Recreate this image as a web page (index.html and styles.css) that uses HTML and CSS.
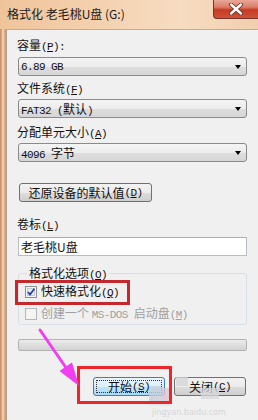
FILE: index.html
```html
<!DOCTYPE html>
<html>
<head>
<meta charset="utf-8">
<link rel="stylesheet" href="styles.css">
</head>
<body>
<div class="window">
  <div class="titlebar">
    <div class="title">格式化 老毛桃U盘 (G:)</div>
    <div class="close-btn">
      <svg width="16" height="12" viewBox="0 0 16 12">
        <path d="M3 1.5 L13 10.5 M13 1.5 L3 10.5" stroke="#5a2a22" stroke-width="4" stroke-linecap="round"/>
        <path d="M3 1.5 L13 10.5 M13 1.5 L3 10.5" stroke="#ffffff" stroke-width="2.4" stroke-linecap="round"/>
      </svg>
    </div>
  </div>
  <div class="main">
    <div class="frame-left"></div>
    <div class="panel">
      <div class="label l1">容量<span class="m">(<u>P</u>):</span></div>
      <div class="combo c1"><span class="m">6.89 GB</span><span class="arrow"></span></div>
      <div class="label l2">文件系统<span class="m">(<u>F</u>)</span></div>
      <div class="combo c2"><span><span class="m">FAT32 (</span>默认<span class="m">)</span></span><span class="arrow"></span></div>
      <div class="label l3">分配单元大小<span class="m">(<u>A</u>)</span></div>
      <div class="combo c3"><span><span class="m">4096 </span>字节</span><span class="arrow"></span></div>
      <div class="btn restore">还原设备的默认值<span class="m">(<u>D</u>)</span></div>
      <div class="label l4">卷标<span class="m">(<u>L</u>)</span></div>
      <div class="input">老毛桃U盘</div>
      <div class="group">
        <div class="legend">格式化选项<span class="m">(<u>O</u>)</span></div>
        <div class="check-row r1">
          <span class="checkbox">
            <svg width="12" height="12" viewBox="0 0 12 12">
              <rect x="0.5" y="0.5" width="11" height="11" fill="#f4f4f4" stroke="#8e8f8f"/>
              <rect x="2.5" y="2.5" width="7" height="7" fill="#e6ecf3" stroke="#c3cbd5"/>
              <path d="M3 6 L5 8.6 L9.4 2.8" fill="none" stroke="#2b3f8f" stroke-width="1.8"/>
            </svg>
          </span>
          <span class="ctext">快速格式化<span class="m">(<u>Q</u>)</span></span>
        </div>
        <div class="check-row r2 disabled">
          <span class="checkbox">
            <svg width="12" height="12" viewBox="0 0 12 12">
              <rect x="0.5" y="0.5" width="11" height="11" fill="#f4f4f4" stroke="#b6b6b6"/>
            </svg>
          </span>
          <span class="ctext">创建一个 <span class="m">MS-DOS </span>启动盘<span class="m">(<u>M</u>)</span></span>
        </div>
      </div>
      <div class="progress"></div>
      <div class="btn-row">
        <div class="btn start"><span class="focus">开始<span class="m">(<u>S</u>)</span></span></div>
        <div class="btn close">关闭<span class="m">(<u>C</u>)</span></div>
      </div>
    </div>
  </div>
</div>

<div class="wm w1"></div>
<div class="wm w2"></div>
<div class="wm w3"></div>
<div class="wm w4"></div>
<div class="wm w5"></div>
<div class="wm-text">jingyan.baidu.com</div>

<div class="hl hl1"></div>
<div class="hl hl2"></div>
<svg class="arrow-svg" width="258" height="420" viewBox="0 0 258 420">
  <path d="M40 330 L69 372" stroke="#f03ef0" stroke-width="3" stroke-linecap="round"/>
  <polygon points="79,386 59.5,371 72,362.5" fill="#f03ef0"/>
</svg>
</body>
</html>
```

FILE: styles.css
```css
* { box-sizing: border-box; }

body {
  margin: 0;
  width: 258px;
  height: 420px;
  overflow: hidden;
  position: relative;
  font-family: "Noto Sans CJK SC", "Noto Sans", sans-serif;
  font-size: 12px;
  color: #111;
  background: #f0f0f0;
}

.m {
  font-family: "Liberation Mono", monospace;
  font-size: 11px;
  letter-spacing: -0.6px;
}

u { text-decoration: underline; text-underline-offset: 1px; }

.window {
  display: flex;
  flex-direction: column;
  height: 420px;
}

.titlebar {
  height: 29px;
  flex: none;
  display: flex;
  justify-content: space-between;
  align-items: flex-start;
  background: linear-gradient(to right, #efc49a 0%, #f4d2b0 40%, #f7dcc2 70%, #f1cfae 100%);
}

.title {
  padding-left: 7px;
  line-height: 28px;
  font-size: 12px;
  color: #1a1a1a;
}

.close-btn {
  width: 45px;
  height: 19px;
  display: flex;
  align-items: center;
  justify-content: center;
  border: 1px solid #7a3328;
  border-top: none;
  border-right: none;
  border-radius: 0 0 0 4px;
  background: linear-gradient(#e9a797 0%, #dc7b66 40%, #c63a22 55%, #cf5238 100%);
}

.main {
  flex: 1;
  display: flex;
}

.frame-left {
  width: 6px;
  flex: none;
  background: linear-gradient(to right, #c58a5c 0px, #dfb08a 2px, #f6e4d2 3px, #e4b78e 4px, #cd966a 6px);
}

.panel {
  flex: 1;
  background: #f0f0f0;
  border-left: 1px solid #b39b86;
  border-top: 1px solid #bfae9e;
  padding: 8px 0 0 11px;
}

.label {
  line-height: 14px;
  height: 14px;
  margin-left: -1px;
  white-space: nowrap;
}
.l2 { margin-top: 5px; }
.l3 { margin-top: 7px; }
.l4 { margin-top: 15px; }

.combo {
  width: 229px;
  height: 19px;
  border: 1px solid #8a8a8a;
  border-radius: 3px;
  background: linear-gradient(#f4f4f4 0%, #ececec 50%, #dedede 51%, #d6d6d6 100%);
  display: flex;
  align-items: center;
  justify-content: space-between;
  padding: 0 5px 0 2px;
  white-space: nowrap;
}
.c1 { margin-top: 5px; }
.c2 { margin-top: 4px; }
.c3 { margin-top: 4px; }

.arrow {
  width: 0;
  height: 0;
  border-left: 3.5px solid transparent;
  border-right: 3.5px solid transparent;
  border-top: 4px solid #000;
}

.btn {
  height: 19px;
  border: 1px solid #707070;
  border-radius: 3px;
  background: linear-gradient(#f2f2f2 0%, #ebebeb 50%, #dddddd 51%, #cfcfcf 100%);
  display: flex;
  align-items: center;
  justify-content: center;
  white-space: nowrap;
}

.restore {
  width: 133px;
  margin-top: 21px;
  margin-left: 1px;
}

.input {
  width: 229px;
  height: 19px;
  margin-top: 6px;
  background: #fff;
  border: 1px solid #b8bcc4;
  border-top-color: #abadb3;
  padding-left: 2px;
  line-height: 17px;
}

.group {
  width: 229px;
  margin-top: 17px;
  border: 1px solid #d5dfe5;
  border-radius: 3px;
  padding: 0 0 3px 6px;
}

.legend {
  display: block;
  width: fit-content;
  height: 14px;
  margin-top: -8px;
  margin-left: 2px;
  padding: 0 2px;
  line-height: 14px;
  background: #f0f0f0;
  white-space: nowrap;
}

.check-row {
  display: flex;
  align-items: center;
  height: 14px;
  line-height: 14px;
  gap: 4px;
  white-space: nowrap;
}
.r1 { margin-top: 5px; }
.r2 { margin-top: 8px; }
.checkbox { width: 12px; height: 12px; display: block; }
.checkbox svg { display: block; }
.disabled .ctext { color: #a0a0a0; }

.progress {
  width: 229px;
  height: 12px;
  margin-top: 14px;
  border: 1px solid #b2b2b2;
  border-radius: 2px;
  background: linear-gradient(#ececec 0%, #dedede 50%, #d3d3d3 100%);
}

.btn-row {
  width: 229px;
  margin-top: 26px;
  display: flex;
  justify-content: flex-end;
  gap: 9px;
  padding-right: 1px;
}

.start, .close { width: 72px; }

.start {
  border-color: #3c7fb1;
  background: linear-gradient(#eaf6fd 0%, #d9f0fc 50%, #bee6fd 51%, #a7d9f5 100%);
  padding: 2px;
}
.start .focus {
  flex: 1;
  align-self: stretch;
  display: flex;
  align-items: center;
  justify-content: center;
  border: 1px dotted #333;
}

.wm { position: absolute; }
.w1 { left: 149px; top: 386px; width: 12px; height: 15px; background: rgba(200, 208, 216, 0.8); }
.w2 { left: 161px; top: 388px; width: 8px; height: 13px; background: rgba(222, 198, 208, 0.8); }
.w3 { left: 176px; top: 377px; width: 12px; height: 9px; background: rgba(212, 212, 216, 0.75); }
.w4 { left: 201px; top: 388px; width: 18px; height: 11px; background: rgba(216, 216, 220, 0.75); }
.w5 { left: 150px; top: 401px; width: 20px; height: 5px; background: rgba(230, 230, 234, 0.8); }
.wm-text {
  position: absolute;
  left: 152px;
  top: 408px;
  line-height: 10px;
  font-family: "DejaVu Sans", sans-serif;
  font-size: 8px;
  color: rgba(200, 200, 204, 0.7);
}

.hl { position: absolute; }
.hl1 {
  left: 15px; top: 280px; width: 115px; height: 25px;
  border: 3px solid #c4282c;
}
.hl2 {
  left: 77px; top: 366px; width: 95px; height: 38px;
  border: 3px solid #ec262a;
}

.arrow-svg { position: absolute; left: 0; top: 0; }
```
